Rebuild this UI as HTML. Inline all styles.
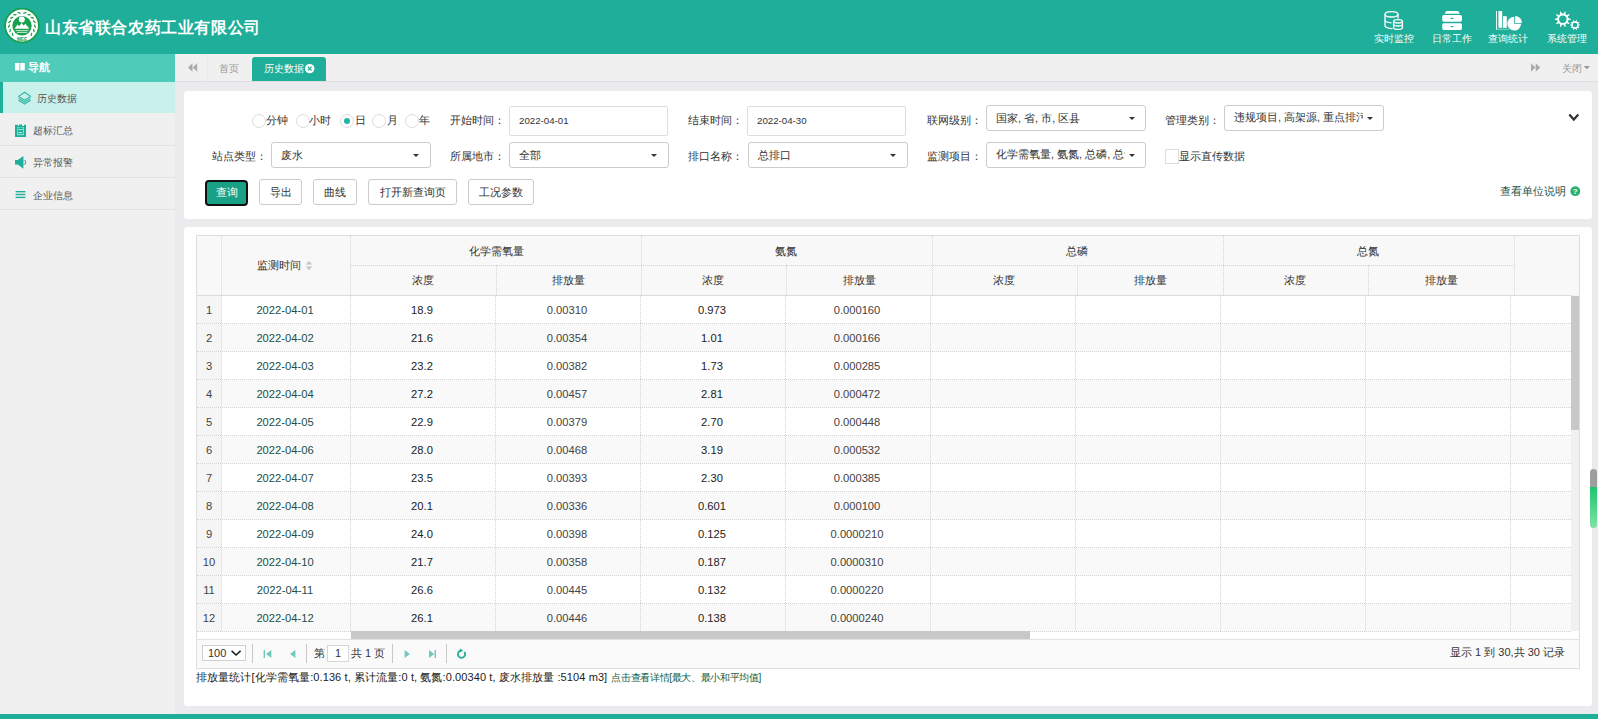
<!DOCTYPE html><html><head><meta charset="utf-8"><style>*{box-sizing:border-box;margin:0;padding:0}
html,body{width:1598px;height:719px;overflow:hidden;background:#ebebed;font-family:"Liberation Sans",sans-serif;font-size:12px;color:#333}
.abs{position:absolute}
#hdr{left:0;top:0;width:1598px;height:54px;background:#1eae99}
#title{left:45px;top:19px;color:#fff;font-size:16px;line-height:18px;font-weight:bold;white-space:nowrap;letter-spacing:0.6px}
.menu{top:0;width:58px;height:54px;color:#fff;text-align:center}
.menu svg{position:absolute;top:10px}
.menu span{position:absolute;left:-10px;right:-10px;top:31px;font-size:11px;line-height:14px;white-space:nowrap;text-align:center}
#side{left:0;top:54px;width:175px;height:665px;background:#f0f0f0}
#navh{left:0;top:54px;width:175px;height:28px;background:#4ecbb9;color:#fff;font-weight:bold;font-size:11px}
#navh span{position:absolute;left:28px;top:6px;line-height:14px}
.navsq{position:absolute;left:16px;top:63px}
.sitem{position:absolute;left:0;width:175px;height:32px;border-bottom:1px solid #e3e3e3;color:#555;font-size:10px}
.sitem span{position:absolute;left:33px;top:9px;line-height:14px}
#tabs{left:175px;top:54px;width:1423px;height:28px;background:#f0f0f0;border-bottom:1px solid #dedede}
#p1{left:184px;top:91px;width:1408px;height:128px;background:#fff;border-radius:3px}
#p2{left:184px;top:227px;width:1408px;height:479px;background:#fff;border-radius:3px}
#bline{left:0;top:714px;width:1598px;height:5px;background:#1eae99}
.lbl{font-size:11px;color:#333;line-height:14px;white-space:nowrap}
.inp{background:#fff;border:1px solid #ddd;border-radius:2px;height:30px;width:159px}
.sel{background:#fff;border:1px solid #ccc;border-radius:3px;height:26px;width:160px}
.inp span,.sel span{position:absolute;left:9px;line-height:14px;font-size:11px;color:#333;white-space:nowrap}
.inp span{top:7px;font-size:9.7px}
.sel span{top:5px}
.caret{position:absolute;width:0;height:0;border-left:3.5px solid transparent;border-right:3.5px solid transparent;border-top:3.5px solid #333}
.radio{width:14px;height:14px;border:1px solid #ddd;border-radius:50%;background:#fff}
.btn{height:26px;border:1px solid #ccc;border-radius:3px;background:#fff;font-size:11px;color:#333;text-align:center;line-height:24px;white-space:nowrap}
#tbox{left:196px;top:235px;width:1384px;height:434px;border:1px solid #dedede;background:#fff}
#thead{left:197px;top:236px;width:1382px;height:59px;background:#f8f8f8}
#thb{left:197px;top:295px;width:1382px;height:1px;background:#dcdcdc}
.dv{width:1px;border-left:1px dotted #d4d4d4}
.dh{height:1px;border-top:1px dotted #d4d4d4}
.th{font-size:11.3px;color:#333;text-align:center;line-height:14px;white-space:nowrap}
.g1{top:244px}
.g2{top:273px}
.sorti{position:relative;left:2px;top:1px}
.row{left:197px;width:1374px;height:28px;border-bottom:1px dotted #d4d4d4}
.odd{background:#fff}
.even{background:#f9f9f9}
.rnum{left:197px;width:24px;height:28px;background:#f5f5f5;border-bottom:1px dotted #d4d4d4}
.td{font-size:11.2px;line-height:28px;height:28px;text-align:center;white-space:nowrap}
.tn{color:#444}
.tdate{color:#1a5048}
.tc{color:#222}
.te{color:#444}
#vtrack{left:1571px;top:295px;width:8px;height:336px;background:#f1f1f1}
#vthumb{left:1571px;top:296px;width:8px;height:134px;background:#c8c8c8}
#htrack{left:197px;top:632px;width:154px;height:7px;background:#fff}
#hthumb{left:351px;top:631px;width:679px;height:8px;background:#c8c8c8}
#pgscroll{left:1590px;top:469px;width:7px;height:59px;border-radius:4px;overflow:hidden}
#pgs1{height:18px;background:#9e9e9e}
#pgs2{height:41px;background:linear-gradient(#1fc46e,#7ee3a6)}
.mtxt{color:#fff;font-size:10px;line-height:15px;text-align:center;white-space:nowrap}
.stx{font-size:10px;line-height:15px;color:#555;white-space:nowrap}
.tabt{font-size:10px;line-height:16px;white-space:nowrap}
.seltx{font-size:11px;line-height:14px;color:#333;white-space:nowrap}
.pgt{font-size:11px;line-height:14px;color:#333;white-space:nowrap}
.pdiv{top:644px;width:1px;height:19px;background:#c8c8c8}
</style></head><body>
<div class="abs" id="hdr"></div>
<svg class="abs" style="left:2px;top:6px" width="40" height="40" viewBox="0 0 40 40">
<circle cx="20" cy="19.5" r="16.9" fill="#fff" stroke="#18a04e" stroke-width="1.8"/>
<circle cx="20" cy="19.8" r="9.7" fill="#18a04e"/>
<circle cx="19.8" cy="13.5" r="3" fill="#fff"/>
<path d="M12.6 22.8 L15.6 18.6 L17.2 20.2 L19.6 17 L21.6 19.6 L23.4 17.8 L25.6 20.6 L27.4 22.8 Z" fill="#fff"/>
<path d="M13.6 24.6 H26.4 M14.8 26.4 H25.2" stroke="#fff" stroke-width="0.9" opacity="0.85"/>
<g fill="#18a04e"><ellipse cx="10.57" cy="28.30" rx="1.9" ry="0.7" transform="rotate(257.0 10.57 28.30)"/>
<ellipse cx="8.13" cy="24.54" rx="1.9" ry="0.7" transform="rotate(277.0 8.13 24.54)"/>
<ellipse cx="7.12" cy="20.18" rx="1.9" ry="0.7" transform="rotate(297.0 7.12 20.18)"/>
<ellipse cx="7.66" cy="15.73" rx="1.9" ry="0.7" transform="rotate(317.0 7.66 15.73)"/>
<ellipse cx="9.70" cy="11.74" rx="1.9" ry="0.7" transform="rotate(337.0 9.70 11.74)"/>
<ellipse cx="12.97" cy="8.68" rx="1.9" ry="0.7" transform="rotate(357.0 12.97 8.68)"/>
<ellipse cx="17.10" cy="6.93" rx="1.9" ry="0.7" transform="rotate(377.0 17.10 6.93)"/>
<ellipse cx="29.43" cy="28.30" rx="1.9" ry="0.7" transform="rotate(103.0 29.43 28.30)"/>
<ellipse cx="31.87" cy="24.54" rx="1.9" ry="0.7" transform="rotate(83.0 31.87 24.54)"/>
<ellipse cx="32.88" cy="20.18" rx="1.9" ry="0.7" transform="rotate(63.0 32.88 20.18)"/>
<ellipse cx="32.34" cy="15.73" rx="1.9" ry="0.7" transform="rotate(43.0 32.34 15.73)"/>
<ellipse cx="30.30" cy="11.74" rx="1.9" ry="0.7" transform="rotate(23.0 30.30 11.74)"/>
<ellipse cx="27.03" cy="8.68" rx="1.9" ry="0.7" transform="rotate(3.0 27.03 8.68)"/>
<ellipse cx="22.90" cy="6.93" rx="1.9" ry="0.7" transform="rotate(-17.0 22.90 6.93)"/></g>
<text x="20" y="35" font-size="4.6" font-family="Liberation Sans" font-weight="bold" fill="#18a04e" text-anchor="middle">MEE</text>
</svg>
<div class="abs" id="title">山东省联合农药工业有限公司</div>
<svg class="abs" style="left:1370px;top:0" width="228" height="54" viewBox="1370 0 228 54">
<g fill="none" stroke="#fff" stroke-width="1.3">
<ellipse cx="1391.5" cy="14.3" rx="6.5" ry="2.7"/>
<path d="M1385 14.3 V26 Q1386 28.2 1392.5 28.6"/>
<path d="M1398 14.3 V18.6"/>
<path d="M1385 20.5 Q1386 22.4 1391.5 22.8"/>
<ellipse cx="1398" cy="21.3" rx="4.4" ry="1.7"/>
<path d="M1393.6 21.3 V27.8 Q1394 29.4 1398 29.4 Q1402 29.4 1402.4 27.8 V21.3"/>
<path d="M1393.6 24.6 Q1394 26 1398 26 Q1402 26 1402.4 24.6"/>
</g>
<g fill="#fff">
<path d="M1446.8 11 H1457.6 Q1459 11 1459.8 13.8 H1444.6 Q1445.4 11 1446.8 11Z"/>
<path d="M1443.8 15.1 H1460.4 Q1462 15.1 1462 16.7 V20.1 Q1462 21.7 1460.4 21.7 H1443.8 Q1442.2 21.7 1442.2 20.1 V16.7 Q1442.2 15.1 1443.8 15.1Z M1450.2 18.4 a1.8 0.6 0 1 0 3.6 0 a1.8 0.6 0 1 0 -3.6 0Z" fill-rule="evenodd"/>
<path d="M1443.8 23.3 H1460.4 Q1462 23.3 1462 24.9 V28.3 Q1462 29.9 1460.4 29.9 H1443.8 Q1442.2 29.9 1442.2 28.3 V24.9 Q1442.2 23.3 1443.8 23.3Z M1450.2 26.6 a1.8 0.6 0 1 0 3.6 0 a1.8 0.6 0 1 0 -3.6 0Z" fill-rule="evenodd"/>
<rect x="1496.1" y="11" width="0.9" height="18.6"/>
<rect x="1496.1" y="28.8" width="13" height="0.8" opacity="0.6"/>
<rect x="1498.4" y="11.1" width="3.8" height="16.7"/>
<rect x="1503" y="16.2" width="3.8" height="11.6"/>
<path d="M1514.2 16.8 V23.8 H1521.1 A6.9 6.9 0 1 1 1514.2 16.8Z"/>
<path d="M1515.1 16.1 A6.9 6.9 0 0 1 1522 23 H1515.1Z"/>
<path fill-rule="evenodd" d="M1568.43 18.31 L1570.78 18.70 L1570.78 19.70 L1568.43 20.09 L1567.88 21.79 L1569.55 23.49 L1568.96 24.30 L1566.83 23.23 L1565.39 24.28 L1565.74 26.64 L1564.79 26.95 L1563.69 24.83 L1561.91 24.83 L1560.81 26.95 L1559.86 26.64 L1560.21 24.28 L1558.77 23.23 L1556.64 24.30 L1556.05 23.49 L1557.72 21.79 L1557.17 20.09 L1554.82 19.70 L1554.82 18.70 L1557.17 18.31 L1557.72 16.61 L1556.05 14.91 L1556.64 14.10 L1558.77 15.17 L1560.21 14.12 L1559.86 11.76 L1560.81 11.45 L1561.91 13.57 L1563.69 13.57 L1564.79 11.45 L1565.74 11.76 L1565.39 14.12 L1566.83 15.17 L1568.96 14.10 L1569.55 14.91 L1567.88 16.61ZM1559.10 19.20 a3.70 3.70 0 1 0 7.40 0 a3.70 3.70 0 1 0 -7.40 0Z"/>
<path fill-rule="evenodd" d="M1578.75 24.41 L1580.19 24.67 L1580.19 25.33 L1578.75 25.59 L1578.39 26.73 L1579.39 27.79 L1579.01 28.31 L1577.69 27.69 L1576.73 28.39 L1576.91 29.83 L1576.29 30.04 L1575.59 28.75 L1574.41 28.75 L1573.71 30.04 L1573.09 29.83 L1573.27 28.39 L1572.31 27.69 L1570.99 28.31 L1570.61 27.79 L1571.61 26.73 L1571.25 25.59 L1569.81 25.33 L1569.81 24.67 L1571.25 24.41 L1571.61 23.27 L1570.61 22.21 L1570.99 21.69 L1572.31 22.31 L1573.27 21.61 L1573.09 20.17 L1573.71 19.96 L1574.41 21.25 L1575.59 21.25 L1576.29 19.96 L1576.91 20.17 L1576.73 21.61 L1577.69 22.31 L1579.01 21.69 L1579.39 22.21 L1578.39 23.27ZM1572.70 25.00 a2.30 2.30 0 1 0 4.60 0 a2.30 2.30 0 1 0 -4.60 0Z"/>
</g>
</svg>
<div class="abs mtxt" style="left:1354px;top:31px;width:80px">实时监控</div>
<div class="abs mtxt" style="left:1412px;top:31px;width:80px">日常工作</div>
<div class="abs mtxt" style="left:1468px;top:31px;width:80px">查询统计</div>
<div class="abs mtxt" style="left:1527px;top:31px;width:80px">系统管理</div>
<div class="abs" id="side"></div>
<div class="abs" id="navh"><i class="navsq"></i><span>导航</span></div>
<svg class="abs" style="left:15px;top:63px" width="11" height="8" viewBox="0 0 11 8"><rect x="0" y="0" width="4.5" height="7.5" fill="#fff"/><rect x="5.3" y="0" width="4.5" height="7.5" fill="#fff"/></svg>
<div class="abs" style="left:0;top:82px;width:175px;height:31px;background:#c9f1ec"></div>
<div class="abs" style="left:0;top:82px;width:3px;height:31px;background:#1eae99"></div>
<svg class="abs" style="left:17px;top:91px" width="15" height="15" viewBox="17 91 15 15">
<g fill="none" stroke="#2db49f" stroke-width="1.1" stroke-linejoin="round">
<path d="M24.6 92.2 L30.6 96.4 L24.6 100.2 L18.6 96.4Z"/>
<path d="M18.6 98.4 L24.6 102.2 L30.6 98.4"/>
<path d="M18.6 100.3 L24.6 104.1 L30.6 100.3"/>
</g></svg>
<div class="abs stx" style="left:37px;top:91px">历史数据</div>
<div class="abs" style="left:0;top:145px;width:175px;height:1px;background:#e2e2e2"></div>
<div class="abs" style="left:0;top:177px;width:175px;height:1px;background:#e2e2e2"></div>
<div class="abs" style="left:0;top:209px;width:175px;height:1px;background:#e2e2e2"></div>
<svg class="abs" style="left:14px;top:123px" width="14" height="15" viewBox="14 123 14 15">
<path d="M15 124.8 H18 V126 H24 V124.8 H26 V137 H15Z" fill="#1eae99"/>
<rect x="17" y="127" width="7" height="8.2" fill="#8fd8cb"/>
<rect x="17.8" y="127.6" width="5.2" height="6.4" fill="#1eae99"/>
<rect x="18.4" y="129.3" width="4.3" height="0.8" fill="#e8f7f4"/>
<rect x="18.4" y="132.3" width="3.8" height="0.8" fill="#fff"/>
<path d="M18.6 126 L19.2 124.5 H21.8 L22.4 126Z" fill="#1eae99"/>
</svg>
<div class="abs stx" style="left:33px;top:123px">超标汇总</div>
<svg class="abs" style="left:14px;top:155px" width="13" height="15" viewBox="14 155 13 15">
<path d="M15 160 H17.8 L23.4 156 V168.8 L17.8 164.6 H15Z" fill="#1eae99"/>
<path d="M23.4 160.8 H25.6 V164 H23.4" fill="none" stroke="#1eae99" stroke-width="0.9"/>
</svg>
<div class="abs stx" style="left:33px;top:155px">异常报警</div>
<svg class="abs" style="left:15px;top:190px" width="11" height="9" viewBox="15 190 11 9">
<rect x="15.6" y="191" width="9.8" height="1.4" fill="#1eae99"/>
<rect x="15.6" y="193.8" width="9.8" height="1.4" fill="#1eae99"/>
<rect x="15.6" y="196.7" width="9.8" height="1.4" fill="#1eae99"/>
</svg>
<div class="abs stx" style="left:33px;top:188px">企业信息</div>

<div class="abs" id="tabs"></div>
<svg class="abs" style="left:187px;top:63px" width="11" height="10" viewBox="187 63 11 10"><path d="M192.5 63.3 V71.7 L188 67.5Z M197.2 63.3 V71.7 L192.7 67.5Z" fill="#aaa"/></svg>
<div class="abs" style="left:207px;top:54px;width:1px;height:27px;background:#e9e9e9"></div>
<div class="abs tabt" style="left:219px;top:61px;color:#999">首页</div>
<div class="abs" style="left:252px;top:57px;width:74px;height:24px;background:#1eae99;border-radius:3px 3px 0 0"></div>
<div class="abs tabt" style="left:264px;top:61px;color:#fff">历史数据</div>
<svg class="abs" style="left:304px;top:63px" width="12" height="12" viewBox="304 63 12 12"><circle cx="309.7" cy="68.6" r="4.7" fill="#fff"/><path d="M307.8 66.7 L311.6 70.5 M311.6 66.7 L307.8 70.5" stroke="#1eae99" stroke-width="1.2"/></svg>
<svg class="abs" style="left:1530px;top:63px" width="11" height="10" viewBox="1530 63 11 10"><path d="M1531 63.3 V71.7 L1535.5 67.5Z M1535.7 63.3 V71.7 L1540.2 67.5Z" fill="#aaa"/></svg>
<div class="abs tabt" style="left:1562px;top:61px;color:#999">关闭</div>
<svg class="abs" style="left:1583px;top:65px" width="8" height="5" viewBox="1583 65 8 5"><path d="M1583.7 66 H1590 L1586.85 69.2Z" fill="#999"/></svg>

<div class="abs" id="p1"></div>
<div class="abs radio" style="left:252px;top:114px"></div>
<div class="abs lbl" style="left:266px;top:113px">分钟</div>
<div class="abs radio" style="left:296px;top:114px"></div>
<div class="abs lbl" style="left:309px;top:113px">小时</div>
<div class="abs radio" style="left:340px;top:114px"></div>
<div class="abs" style="left:344px;top:118px;width:6px;height:6px;border-radius:50%;background:#1eb5a6"></div>
<div class="abs lbl" style="left:355px;top:113px">日</div>
<div class="abs radio" style="left:372px;top:114px"></div>
<div class="abs lbl" style="left:387px;top:113px">月</div>
<div class="abs radio" style="left:405px;top:114px"></div>
<div class="abs lbl" style="left:419px;top:113px">年</div>
<div class="abs lbl" style="left:450px;top:113px">开始时间：</div>
<div class="abs inp" style="left:509px;top:106px"><span>2022-04-01</span></div>
<div class="abs lbl" style="left:688px;top:113px">结束时间：</div>
<div class="abs inp" style="left:747px;top:106px"><span>2022-04-30</span></div>
<div class="abs lbl" style="left:927px;top:113px">联网级别：</div>
<div class="abs sel" style="left:986px;top:105px;width:160px;overflow:hidden"><span>国家, 省, 市, 区县</span></div>
<div class="abs caret" style="left:1129px;top:117px"></div>
<div class="abs lbl" style="left:1165px;top:113px">管理类别：</div>
<div class="abs sel" style="left:1224px;top:105px;width:160px"></div>
<div class="abs" style="left:1234px;top:110px;width:129px;height:16px;overflow:hidden"><span class="seltx" style="position:absolute;left:0;top:0">违规项目, 高架源, 重点排污</span></div>
<div class="abs caret" style="left:1367px;top:117px"></div>
<div class="abs lbl" style="left:212px;top:149px">站点类型：</div>
<div class="abs sel" style="left:271px;top:142px;width:160px;overflow:hidden"><span>废水</span></div>
<div class="abs caret" style="left:413px;top:154px"></div>
<div class="abs lbl" style="left:450px;top:149px">所属地市：</div>
<div class="abs sel" style="left:509px;top:142px;width:160px;overflow:hidden"><span>全部</span></div>
<div class="abs caret" style="left:651px;top:154px"></div>
<div class="abs lbl" style="left:688px;top:149px">排口名称：</div>
<div class="abs sel" style="left:748px;top:142px;width:160px;overflow:hidden"><span>总排口</span></div>
<div class="abs caret" style="left:890px;top:154px"></div>
<div class="abs lbl" style="left:927px;top:149px">监测项目：</div>
<div class="abs sel" style="left:986px;top:142px"></div>
<div class="abs" style="left:996px;top:147px;width:129px;height:16px;overflow:hidden"><span class="seltx" style="position:absolute;left:0;top:0">化学需氧量, 氨氮, 总磷, 总氮</span></div>
<div class="abs caret" style="left:1129px;top:154px"></div>
<div class="abs" style="left:1165px;top:149px;width:14px;height:15px;border:1px solid #ddd;background:#fff"></div>
<div class="abs lbl" style="left:1179px;top:149px">显示直传数据</div>
<div class="abs" style="left:205px;top:180px;width:43px;height:26px;border:2px solid #111;border-radius:4px;background:#1aa085"></div>
<div class="abs lbl" style="left:205px;top:185px;width:43px;text-align:center;color:#fff">查询</div>
<div class="abs btn" style="left:259px;top:179px;width:43px"></div>
<div class="abs lbl" style="left:259px;top:185px;width:43px;text-align:center">导出</div>
<div class="abs btn" style="left:313px;top:179px;width:44px"></div>
<div class="abs lbl" style="left:313px;top:185px;width:44px;text-align:center">曲线</div>
<div class="abs btn" style="left:368px;top:179px;width:89px"></div>
<div class="abs lbl" style="left:368px;top:185px;width:89px;text-align:center">打开新查询页</div>
<div class="abs btn" style="left:468px;top:179px;width:66px"></div>
<div class="abs lbl" style="left:468px;top:185px;width:66px;text-align:center">工况参数</div>
<svg class="abs" style="left:1566px;top:111px" width="16" height="12" viewBox="1566 111 16 12"><path d="M1569.3 114.5 L1573.8 119.5 L1578.3 114.5" fill="none" stroke="#333" stroke-width="2.2"/></svg>
<div class="abs lbl" style="left:1500px;top:184px;color:#1e5048">查看单位说明</div>
<svg class="abs" style="left:1570px;top:186px" width="11" height="11" viewBox="1570 186 11 11"><circle cx="1575.3" cy="191.2" r="4.9" fill="#27b36d"/><text x="1575.3" y="194.3" font-size="8" font-weight="bold" font-family="Liberation Sans" fill="#fff" text-anchor="middle">?</text></svg>
<div class="abs" id="p2"></div>
<div class="abs" id="tbox"></div>
<div class="abs" id="thead"></div>
<div class="abs dv" style="left:221px;top:235px;height:60px"></div>
<div class="abs dv" style="left:350px;top:235px;height:60px"></div>
<div class="abs dv" style="left:1514px;top:235px;height:60px"></div>
<div class="abs dv" style="left:641px;top:235px;height:60px"></div>
<div class="abs dv" style="left:932px;top:235px;height:60px"></div>
<div class="abs dv" style="left:1223px;top:235px;height:60px"></div>
<div class="abs dv" style="left:496px;top:265px;height:30px"></div>
<div class="abs dv" style="left:786px;top:265px;height:30px"></div>
<div class="abs dv" style="left:1077px;top:265px;height:30px"></div>
<div class="abs dv" style="left:1368px;top:265px;height:30px"></div>
<div class="abs dh" style="left:351px;top:265px;width:1163px"></div>
<div class="abs" id="thb"></div>
<div class="abs th" style="left:257px;top:258px;text-align:left">监测时间</div><svg class="abs" style="left:305px;top:260px" width="8" height="11" viewBox="305 260 8 11"><path d="M309 261 L312.2 264.6 H305.8Z M309 270.2 L312.2 266.6 H305.8Z" fill="#c4c4c4"/></svg>
<div class="abs th" style="left:396px;top:244px;width:200px">化学需氧量</div>
<div class="abs th" style="left:323px;top:273px;width:200px">浓度</div>
<div class="abs th" style="left:468px;top:273px;width:200px">排放量</div>
<div class="abs th" style="left:686px;top:244px;width:200px">氨氮</div>
<div class="abs th" style="left:613px;top:273px;width:200px">浓度</div>
<div class="abs th" style="left:759px;top:273px;width:200px">排放量</div>
<div class="abs th" style="left:977px;top:244px;width:200px">总磷</div>
<div class="abs th" style="left:904px;top:273px;width:200px">浓度</div>
<div class="abs th" style="left:1050px;top:273px;width:200px">排放量</div>
<div class="abs th" style="left:1268px;top:244px;width:200px">总氮</div>
<div class="abs th" style="left:1195px;top:273px;width:200px">浓度</div>
<div class="abs th" style="left:1341px;top:273px;width:200px">排放量</div>
<div class="abs row odd" style="top:296px"></div>
<div class="abs rnum" style="top:296px"></div>
<div class="abs td tn" style="left:109px;top:296px;width:200px">1</div>
<div class="abs td tdate" style="left:185px;top:296px;width:200px">2022-04-01</div>
<div class="abs td tc" style="left:322px;top:296px;width:200px">18.9</div>
<div class="abs td te" style="left:467px;top:296px;width:200px">0.00310</div>
<div class="abs td tc" style="left:612px;top:296px;width:200px">0.973</div>
<div class="abs td te" style="left:757px;top:296px;width:200px">0.000160</div>
<div class="abs row even" style="top:324px"></div>
<div class="abs rnum" style="top:324px"></div>
<div class="abs td tn" style="left:109px;top:324px;width:200px">2</div>
<div class="abs td tdate" style="left:185px;top:324px;width:200px">2022-04-02</div>
<div class="abs td tc" style="left:322px;top:324px;width:200px">21.6</div>
<div class="abs td te" style="left:467px;top:324px;width:200px">0.00354</div>
<div class="abs td tc" style="left:612px;top:324px;width:200px">1.01</div>
<div class="abs td te" style="left:757px;top:324px;width:200px">0.000166</div>
<div class="abs row odd" style="top:352px"></div>
<div class="abs rnum" style="top:352px"></div>
<div class="abs td tn" style="left:109px;top:352px;width:200px">3</div>
<div class="abs td tdate" style="left:185px;top:352px;width:200px">2022-04-03</div>
<div class="abs td tc" style="left:322px;top:352px;width:200px">23.2</div>
<div class="abs td te" style="left:467px;top:352px;width:200px">0.00382</div>
<div class="abs td tc" style="left:612px;top:352px;width:200px">1.73</div>
<div class="abs td te" style="left:757px;top:352px;width:200px">0.000285</div>
<div class="abs row even" style="top:380px"></div>
<div class="abs rnum" style="top:380px"></div>
<div class="abs td tn" style="left:109px;top:380px;width:200px">4</div>
<div class="abs td tdate" style="left:185px;top:380px;width:200px">2022-04-04</div>
<div class="abs td tc" style="left:322px;top:380px;width:200px">27.2</div>
<div class="abs td te" style="left:467px;top:380px;width:200px">0.00457</div>
<div class="abs td tc" style="left:612px;top:380px;width:200px">2.81</div>
<div class="abs td te" style="left:757px;top:380px;width:200px">0.000472</div>
<div class="abs row odd" style="top:408px"></div>
<div class="abs rnum" style="top:408px"></div>
<div class="abs td tn" style="left:109px;top:408px;width:200px">5</div>
<div class="abs td tdate" style="left:185px;top:408px;width:200px">2022-04-05</div>
<div class="abs td tc" style="left:322px;top:408px;width:200px">22.9</div>
<div class="abs td te" style="left:467px;top:408px;width:200px">0.00379</div>
<div class="abs td tc" style="left:612px;top:408px;width:200px">2.70</div>
<div class="abs td te" style="left:757px;top:408px;width:200px">0.000448</div>
<div class="abs row even" style="top:436px"></div>
<div class="abs rnum" style="top:436px"></div>
<div class="abs td tn" style="left:109px;top:436px;width:200px">6</div>
<div class="abs td tdate" style="left:185px;top:436px;width:200px">2022-04-06</div>
<div class="abs td tc" style="left:322px;top:436px;width:200px">28.0</div>
<div class="abs td te" style="left:467px;top:436px;width:200px">0.00468</div>
<div class="abs td tc" style="left:612px;top:436px;width:200px">3.19</div>
<div class="abs td te" style="left:757px;top:436px;width:200px">0.000532</div>
<div class="abs row odd" style="top:464px"></div>
<div class="abs rnum" style="top:464px"></div>
<div class="abs td tn" style="left:109px;top:464px;width:200px">7</div>
<div class="abs td tdate" style="left:185px;top:464px;width:200px">2022-04-07</div>
<div class="abs td tc" style="left:322px;top:464px;width:200px">23.5</div>
<div class="abs td te" style="left:467px;top:464px;width:200px">0.00393</div>
<div class="abs td tc" style="left:612px;top:464px;width:200px">2.30</div>
<div class="abs td te" style="left:757px;top:464px;width:200px">0.000385</div>
<div class="abs row even" style="top:492px"></div>
<div class="abs rnum" style="top:492px"></div>
<div class="abs td tn" style="left:109px;top:492px;width:200px">8</div>
<div class="abs td tdate" style="left:185px;top:492px;width:200px">2022-04-08</div>
<div class="abs td tc" style="left:322px;top:492px;width:200px">20.1</div>
<div class="abs td te" style="left:467px;top:492px;width:200px">0.00336</div>
<div class="abs td tc" style="left:612px;top:492px;width:200px">0.601</div>
<div class="abs td te" style="left:757px;top:492px;width:200px">0.000100</div>
<div class="abs row odd" style="top:520px"></div>
<div class="abs rnum" style="top:520px"></div>
<div class="abs td tn" style="left:109px;top:520px;width:200px">9</div>
<div class="abs td tdate" style="left:185px;top:520px;width:200px">2022-04-09</div>
<div class="abs td tc" style="left:322px;top:520px;width:200px">24.0</div>
<div class="abs td te" style="left:467px;top:520px;width:200px">0.00398</div>
<div class="abs td tc" style="left:612px;top:520px;width:200px">0.125</div>
<div class="abs td te" style="left:757px;top:520px;width:200px">0.0000210</div>
<div class="abs row even" style="top:548px"></div>
<div class="abs rnum" style="top:548px"></div>
<div class="abs td tn" style="left:109px;top:548px;width:200px">10</div>
<div class="abs td tdate" style="left:185px;top:548px;width:200px">2022-04-10</div>
<div class="abs td tc" style="left:322px;top:548px;width:200px">21.7</div>
<div class="abs td te" style="left:467px;top:548px;width:200px">0.00358</div>
<div class="abs td tc" style="left:612px;top:548px;width:200px">0.187</div>
<div class="abs td te" style="left:757px;top:548px;width:200px">0.0000310</div>
<div class="abs row odd" style="top:576px"></div>
<div class="abs rnum" style="top:576px"></div>
<div class="abs td tn" style="left:109px;top:576px;width:200px">11</div>
<div class="abs td tdate" style="left:185px;top:576px;width:200px">2022-04-11</div>
<div class="abs td tc" style="left:322px;top:576px;width:200px">26.6</div>
<div class="abs td te" style="left:467px;top:576px;width:200px">0.00445</div>
<div class="abs td tc" style="left:612px;top:576px;width:200px">0.132</div>
<div class="abs td te" style="left:757px;top:576px;width:200px">0.0000220</div>
<div class="abs row even" style="top:604px"></div>
<div class="abs rnum" style="top:604px"></div>
<div class="abs td tn" style="left:109px;top:604px;width:200px">12</div>
<div class="abs td tdate" style="left:185px;top:604px;width:200px">2022-04-12</div>
<div class="abs td tc" style="left:322px;top:604px;width:200px">26.1</div>
<div class="abs td te" style="left:467px;top:604px;width:200px">0.00446</div>
<div class="abs td tc" style="left:612px;top:604px;width:200px">0.138</div>
<div class="abs td te" style="left:757px;top:604px;width:200px">0.0000240</div>
<div class="abs dv" style="left:221px;top:295px;height:336px"></div>
<div class="abs dv" style="left:350px;top:295px;height:336px"></div>
<div class="abs dv" style="left:495px;top:295px;height:336px"></div>
<div class="abs dv" style="left:640px;top:295px;height:336px"></div>
<div class="abs dv" style="left:785px;top:295px;height:336px"></div>
<div class="abs dv" style="left:930px;top:295px;height:336px"></div>
<div class="abs dv" style="left:1075px;top:295px;height:336px"></div>
<div class="abs dv" style="left:1220px;top:295px;height:336px"></div>
<div class="abs dv" style="left:1365px;top:295px;height:336px"></div>
<div class="abs dv" style="left:1510px;top:295px;height:336px"></div>
<div class="abs" id="vtrack"></div><div class="abs" id="vthumb"></div>
<div class="abs" id="htrack"></div><div class="abs" id="hthumb"></div>
<div class="abs" style="left:197px;top:639px;width:1382px;height:29px;background:#fafafa;border-top:1px solid #e2e2e2"></div>
<div class="abs" style="left:202px;top:645px;width:44px;height:16px;border:1px solid #d0d0d0;background:#fff"></div>
<div class="abs pgt" style="left:208px;top:646px">100</div>
<svg class="abs" style="left:230px;top:649px" width="12" height="8" viewBox="230 649 12 8"><path d="M231.6 650.8 L236.1 655 L240.6 650.8" fill="none" stroke="#222" stroke-width="1.6"/></svg>
<div class="abs pdiv" style="left:252px"></div>
<div class="abs pdiv" style="left:306px"></div>
<div class="abs pdiv" style="left:392px"></div>
<div class="abs pdiv" style="left:446px"></div>
<svg class="abs" style="left:262px;top:649px" width="176" height="11" viewBox="262 649 176 11"><g fill="#6fcabd">
<rect x="263.6" y="650" width="1.4" height="8"/><path d="M271.4 650 V658 L266 654Z"/>
<path d="M295.4 650 V658 L290 654Z"/>
<path d="M404.6 650 V658 L410 654Z"/>
<path d="M429 650 V658 L434.4 654Z"/><rect x="434.6" y="650" width="1.4" height="8"/>
</g></svg>
<svg class="abs" style="left:456px;top:648px" width="12" height="12" viewBox="456 648 12 12"><path d="M464.3 651.9 A3.6 3.6 0 1 1 460.6 650.7" fill="none" stroke="#2ab09a" stroke-width="1.9"/><path d="M459.8 648.6 L463.4 650.6 L459.8 652.6Z" fill="#2ab09a"/></svg>
<div class="abs pgt" style="left:314px;top:646px">第</div>
<div class="abs" style="left:327px;top:645px;width:22px;height:17px;border:1px solid #d6d6d6;background:#fff"></div>
<div class="abs pgt" style="left:335px;top:646px">1</div>
<div class="abs pgt" style="left:351px;top:646px">共 1 页</div>
<div class="abs pgt" style="left:1450px;top:645px">显示 1 到 30,共 30 记录</div>
<div class="abs" style="left:196px;top:670px;white-space:nowrap;font-size:11px;line-height:14px;color:#222;letter-spacing:0.1px">排放量统计[化学需氧量:0.136 t, 累计流量:0 t, 氨氮:0.00340 t, 废水排放量 :5104 m3] <span style="font-size:10px;color:#0f5c43;letter-spacing:-0.35px;margin-left:1px">点击查看详情[最大、最小和平均值]</span></div>

<div class="abs" id="pgscroll"><div id="pgs1"></div><div id="pgs2"></div></div>
<div class="abs" id="bline"></div>
</body></html>
